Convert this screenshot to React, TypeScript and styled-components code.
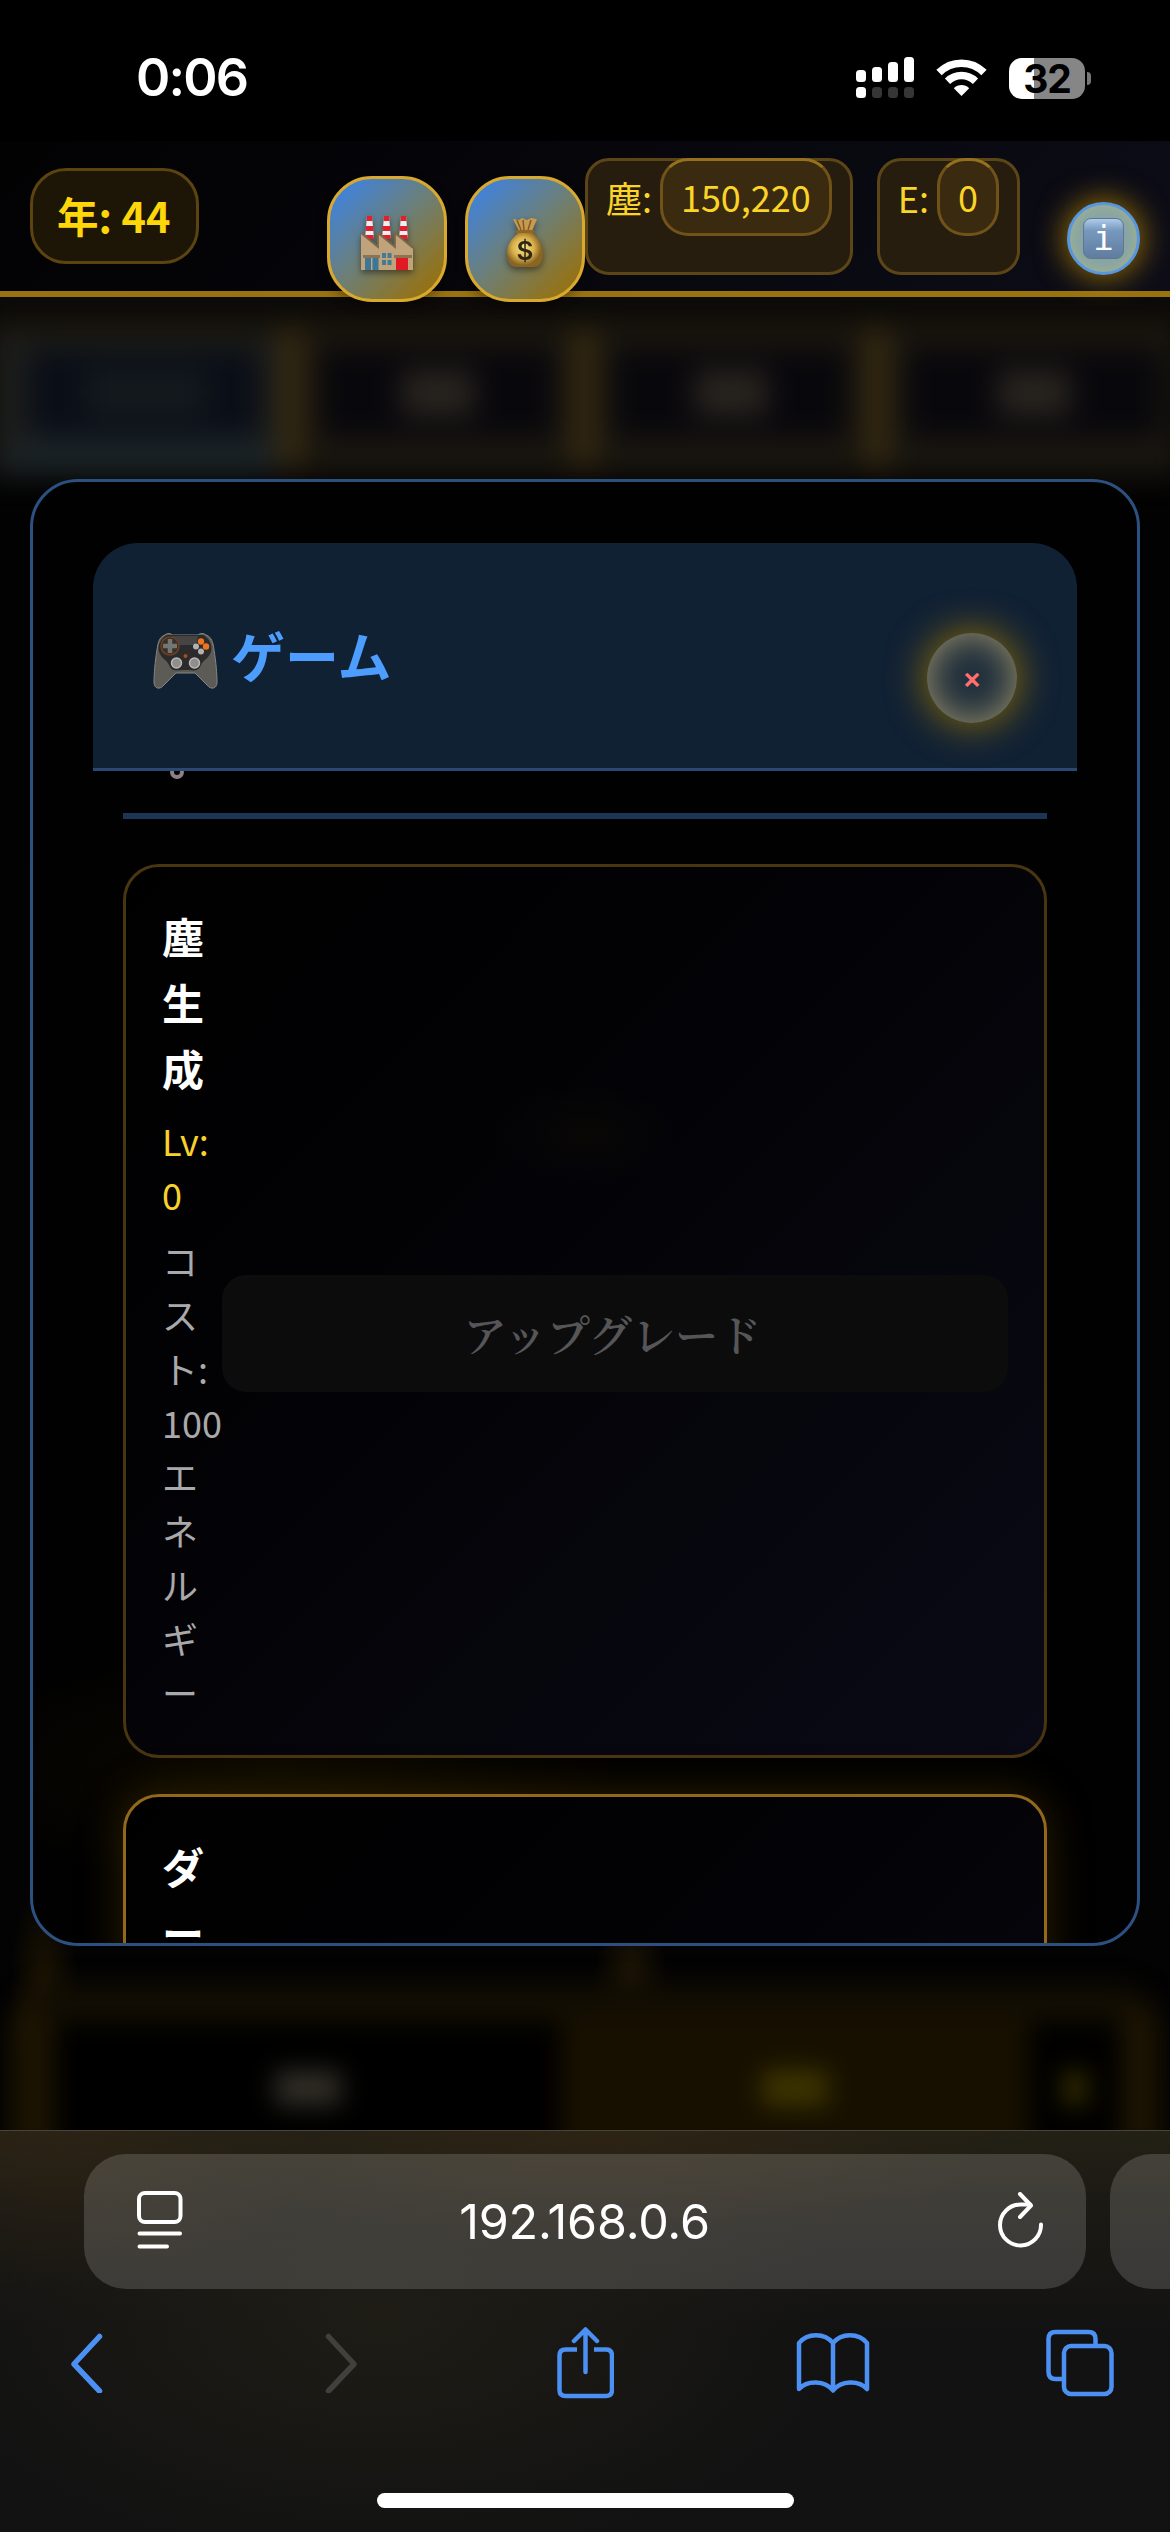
import React from 'react';
import styled, { createGlobalStyle, css } from 'styled-components';

const GlobalStyle = createGlobalStyle`
  * { box-sizing: border-box; }
  html, body { margin: 0; padding: 0; background: #000; }
`;

const jp = `'Noto Sans CJK JP', sans-serif`;
const ui = `Inter, 'Liberation Sans', sans-serif`;

const Screen = styled.div`
  width: 1170px;
  height: 2532px;
  display: flex;
  flex-direction: column;
  background: #000;
  overflow: hidden;
  font-family: ${jp};
`;

/* ---------- status bar ---------- */

const StatusBar = styled.div`
  flex: 0 0 141px;
  display: flex;
  align-items: center;
  padding: 15px 79px 0 136px;
  background: #000;
`;

const Clock = styled.span`
  flex: 1;
  font: 600 52px/60px ${ui};
  letter-spacing: -1.800px;
  color: #fff;
`;

const StatusIcons = styled.div`
  display: flex;
  align-items: center;
  gap: 22px;
`;

const BatteryWrap = styled.div`
  display: flex;
  align-items: center;
  gap: 2px;
`;

const Battery = styled.div`
  width: 76px;
  height: 41px;
  border-radius: 13px;
  background: linear-gradient(90deg, #fff 25px, #868686 25px);
  display: flex;
  align-items: center;
  justify-content: center;
  font: 700 39px/41px ${ui};
  letter-spacing: -1px;
  color: #000;
`;

const BatteryNub = styled.div`
  width: 4px;
  height: 13px;
  border-radius: 0 4px 4px 0;
  background: #777;
`;

/* ---------- game header ---------- */

const GameHeader = styled.header`
  position: relative;
  z-index: 2;
  flex: 0 0 156px;
  min-height: 0;
  display: flex;
  align-items: flex-start;
  padding: 17px 30px 0;
  border-bottom: 6px solid #99730f;
  background: linear-gradient(135deg, #020203 0%, #06060b 45%, #0d0d18 100%);
`;

const YearBadge = styled.div`
  width: 169px;
  height: 96px;
  margin-top: 10px;
  padding-left: 24px;
  border: 3px solid #5c4410;
  border-radius: 36px;
  background: #1d1606;
  color: #ffd60a;
  font-size: 41.500px;
  font-weight: 700;
  line-height: 89px;
  white-space: nowrap;
`;

const Actions = styled.div`
  display: flex;
  gap: 18px;
  margin: 18px 0 0 auto;
`;

const ActionButton = styled.button`
  width: 120px;
  height: 126px;
  padding: 8px 0 0;
  border: 3px solid #d9a92e;
  border-radius: 45px;
  background: linear-gradient(135deg, #3f82dc 8%, #6c7f78 48%, #93731a 86%);
  box-shadow: 0 6px 12px rgba(0, 0, 0, 0.3);
  display: flex;
  align-items: center;
  justify-content: center;

  svg { filter: drop-shadow(0 3px 3px rgba(0, 0, 0, 0.45)); }
`;

const Resource = styled.div<{ $gap?: number }>`
  height: 117px;
  margin-left: ${(p) => p.$gap ?? 0}px;
  padding: 0 18px;
  border: 3px solid #5c4617;
  border-radius: 24px;
  background: #261d0f;
  display: flex;
  align-items: flex-start;
  gap: 8px;
  color: #fad427;
  font-size: 36px;
  line-height: 74px;
  white-space: nowrap;
`;

const ResourceLabel = styled.span`
  margin-top: -1px;
`;

const ResourceValue = styled.span`
  height: 78px;
  margin-top: -3px;
  padding: 0 18px;
  border: 3px solid #71531a;
  border-top-color: #95711d;
  border-radius: 28px;
  background: #3a2a0f;
  line-height: 71px;
`;

const InfoButton = styled.button`
  width: 73px;
  height: 73px;
  margin: 44px 0 0 47px;
  padding: 0;
  border: 3px solid #5797e2;
  border-radius: 50%;
  background: #87a4a6;
  box-shadow: 0 0 30px 3px rgba(190, 140, 0, 0.75), inset 0 0 14px rgba(170, 185, 130, 0.8);
  display: flex;
  align-items: center;
  justify-content: center;
`;

const InfoGlyph = styled.span`
  width: 41px;
  height: 41px;
  border-radius: 8px;
  background: linear-gradient(#aecbe8, #7798bd 30%, #5f7d9f);
  border: 1px solid #5d7894;
  color: #fff;
  font: 400 34px/38px 'DejaVu Sans Mono', monospace;
  text-align: center;
`;

/* ---------- page behind the dialog ---------- */

const Page = styled.main`
  position: relative;
  flex: 1;
  min-height: 0;
  overflow: hidden;
  background: #030303;
`;

const Backdrop = styled.div`
  height: 100%;
  display: flex;
  flex-direction: column;
  justify-content: space-between;
  background:
    radial-gradient(ellipse 34px 110px at 44px 1690px, #1c1403, transparent),
    radial-gradient(ellipse 36px 80px at 631px 1680px, #1d1505, transparent),
    linear-gradient(#0b0a09, #090806 20px, #020202 230px, #030303 1600px, #020203);
`;

const TabBar = styled.div`
  display: flex;
  flex: 0 0 158px;
  margin: 20px -10px 0;
  background: #1a160e;
  filter: blur(14px);
`;

const Tab = styled.div<{ $active?: boolean; $edge?: boolean }>`
  flex: 0 0 ${(p) => (p.$edge ? 289 : 269)}px;
  display: flex;
  align-items: center;
  justify-content: center;
  margin: 20px 0 0;
  border: solid #1a1710;
  border-width: 12px 18px 38px;
  background: #08070b;
  ${(p) =>
    p.$active &&
    css`
      border-left-width: 38px;
      border-color: #1d1e1c;
      border-bottom-color: #1c2427;
      background: #0a0f17;
    `}
`;

const TabSmudge = styled.i<{ $active?: boolean }>`
  width: ${(p) => (p.$active ? 120 : 74)}px;
  height: 46px;
  background: ${(p) => (p.$active ? '#13191d' : '#28241f')};
`;

const TabDivider = styled.div`
  width: 24px;
  margin: 12px 0 8px;
  background: #372a10;
`;

const Dock = styled.div`
  flex: 0 0 166px;
  display: flex;
  margin: 0 10px -20px;
  border: solid #1c1402;
  border-width: 38px 40px 0 45px;
  border-top-color: #130e03;
  border-radius: 50px 50px 0 0;
  filter: blur(12px);
`;

const DockCell = styled.div<{ $w: number; $lit?: boolean }>`
  flex: ${(p) => p.$w};
  display: flex;
  align-items: center;
  justify-content: center;
  background: ${(p) => (p.$lit ? '#171000' : '#000')};
`;

const DockSmudge = styled.i<{ $w: number; $c: string }>`
  width: ${(p) => p.$w}px;
  height: 36px;
  margin-top: 4px;
  background: ${(p) => p.$c};
`;

/* ---------- dialog ---------- */

const Overlay = styled.div`
  position: absolute;
  inset: 0;
  padding: 182px 30px 184px;
  display: flex;
`;

const Dialog = styled.section`
  flex: 1;
  display: flex;
  flex-direction: column;
  padding: 61px 60px 0;
  border: 3px solid #2c5180;
  border-radius: 48px;
  background:
    radial-gradient(ellipse 340px 120px at 22% 88%, rgba(40, 28, 0, 0.3), transparent),
    #010101;
  overflow: hidden;
`;

const DialogHeader = styled.div`
  position: relative;
  z-index: 1;
  flex: 0 0 228px;
  display: flex;
  justify-content: space-between;
  padding: 0 60px;
  border-bottom: 3px solid #294972;
  border-radius: 45px 45px 0 0;
  background: #112134;
`;

const DialogTitle = styled.h2`
  display: flex;
  gap: 13px;
  margin: 70px 0 0;
  color: #4d9dff;
  font-size: 54px;
  font-weight: 700;
  line-height: 84px;

  svg { margin-top: 20px; }
`;

const CloseButton = styled.button`
  width: 90px;
  height: 90px;
  margin-top: 90px;
  padding: 0;
  border: 0;
  border-radius: 50%;
  background: #1f2e3c;
  box-shadow: 0 0 36px 4px rgba(160, 120, 0, 0.75), inset 0 0 36px #99906a;
  color: #ff6f6c;
  font: 600 29px/88px ${ui};
`;

const DialogBody = styled.div`
  flex: 1;
  min-height: 0;
  display: flex;
  flex-direction: column;
  padding: 0 30px;
`;

const SectionTitle = styled.h3`
  flex: 0 0 108px;
  display: flex;
  gap: 12px;
  margin: -60px 0 45px;
  padding-left: 12px;
  border-bottom: 6px solid #1d3554;
  color: #4d9dff;
  font-size: 48px;
  font-weight: 700;
  line-height: 68px;

  svg { margin-top: 15px; }
`;

const Card = styled.article<{ $ready?: boolean }>`
  flex: 0 0 894px;
  display: flex;
  align-items: flex-start;
  margin-bottom: 36px;
  padding: 36px;
  border: 3px solid ${(p) => (p.$ready ? '#92691a' : '#493610')};
  border-radius: 36px;
  background:
    radial-gradient(ellipse 90px 50px at 460px 268px, rgba(40, 28, 0, 0.16), transparent),
    linear-gradient(135deg, #000 0%, #030307 45%, #0a0a16 100%);
  box-shadow: ${(p) => (p.$ready ? '0 0 45px rgba(110, 78, 0, 0.4)' : 'none')};
`;

const CardText = styled.div`
  flex: 0 0 60px;
  line-break: anywhere;
`;

const CardName = styled.div`
  color: #fff;
  font-size: 42px;
  font-weight: 700;
  line-height: 66px;
  margin-bottom: 12px;
`;

const CardLevel = styled.div`
  color: #f8d22b;
  font-size: 36px;
  line-height: 54px;
  margin-bottom: 12px;
`;

const CardCost = styled.div`
  color: #a9a9ab;
  font-size: 36px;
  line-height: 54px;
`;

const UpgradeButton = styled.button`
  flex: 1;
  align-self: center;
  height: 117px;
  margin: 45px 0 0;
  padding: 0 5px 0 0;
  border: 0;
  border-radius: 24px;
  background: #0c0c0d;
  color: #565658;
  font: 600 43.200px/117px 'Noto Serif CJK JP', ${jp};
`;

/* ---------- browser chrome ---------- */

const BrowserBar = styled.footer`
  flex: 0 0 402px;
  display: flex;
  flex-direction: column;
  align-items: center;
  border-top: 1px solid #48443c;
  background:
    radial-gradient(ellipse 420px 110px at 600px 0, rgba(52, 38, 20, 0.6), transparent),
    radial-gradient(ellipse 260px 160px at 60px 0, rgba(52, 38, 20, 0.5), transparent),
    radial-gradient(ellipse 460px 240px at 380px 190px, rgba(32, 30, 22, 0.85), transparent),
    linear-gradient(#232015, #1b1914 80px, #121212 200px);
`;

const AddressRow = styled.div`
  align-self: stretch;
  display: flex;
  gap: 24px;
  padding: 23px 0 0 84px;
`;

const AddressField = styled.div`
  flex: 0 0 1002px;
  height: 135px;
  display: flex;
  align-items: center;
  justify-content: space-between;
  padding: 0 42px 0 53px;
  border-radius: 42px;
  background: rgba(255, 255, 255, 0.155);
`;

const AddressText = styled.span`
  margin-right: 12px;
  color: #fff;
  font: 400 48.500px/60px ${ui};
  letter-spacing: -0.200px;
`;

const NextTab = styled.div`
  flex: 0 0 120px;
  height: 135px;
  border-radius: 42px;
  background: rgba(255, 255, 255, 0.155);
`;

const Toolbar = styled.nav`
  align-self: stretch;
  display: grid;
  grid-template-columns: 255px 233px 240px 250px auto;
  align-items: center;
  height: 80px;
  margin-top: 34px;
  padding-left: 68px;
`;

const HomeIndicator = styled.div`
  width: 417px;
  height: 15px;
  margin-top: 90px;
  border-radius: 8px;
  background: #fff;
`;

/* ---------- drawings ---------- */

const SignalIcon = () => (
  <svg width="58" height="42" viewBox="0 0 58 42" fill="#fff">
    <rect x="0" y="13" width="10" height="12" rx="3.5" />
    <rect x="16" y="10" width="10" height="15" rx="3.5" />
    <rect x="32" y="5" width="10" height="20" rx="3.5" />
    <rect x="48" y="0" width="10" height="25" rx="3.5" />
    <rect x="0" y="30" width="10" height="11" rx="3.5" />
    <g fill="#363636">
      <rect x="16" y="30" width="10" height="11" rx="3.5" />
      <rect x="32" y="30" width="10" height="11" rx="3.5" />
      <rect x="48" y="30" width="10" height="11" rx="3.5" />
    </g>
  </svg>
);

const WifiIcon = () => (
  <svg width="51" height="38" viewBox="0 0 51 38" fill="none" stroke="#fff">
    <path d="M3 13.5C15.5 1 35.5 1 48 13.5" strokeWidth="7.5" />
    <path d="M11.5 22.3C19.5 14.7 31.5 14.7 39.5 22.3" strokeWidth="7.5" />
    <path d="M17.800 29.300C22 25 29 25 33.200 29.300L25.500 37Z" fill="#fff" stroke="none" />
  </svg>
);

const FactoryIcon = () => (
  <svg width="54" height="56" viewBox="0 0 54 56">
    {[6, 23, 40].map((x) => (
      <g key={x}>
        <path d={`M${x + 1} 1H${x + 6}L${x + 8} 24H${x - 1}Z`} fill="#f1eeee" />
        <path
          d={`M${x + 1} 1H${x + 6}L${x + 6.5} 6H${x + 0.5}ZM${x} 11H${x + 7}L${x + 7.5} 16H${x - 0.5}ZM${x - 0.5} 20H${x + 7.5}L${x + 8} 24H${x - 1}Z`}
          fill="#e0202c"
        />
      </g>
    ))}
    <path d="M1 18L18 32V18L35 32V18L53 33V55H1Z" fill="#c0a37b" />
    <path d="M1 18L18 32V18L35 32V18L53 33" fill="none" stroke="#7d6749" strokeWidth="1.8" />
    <path d="M3 40H20V43H3ZM34 40H52V43H34Z" fill="#8b7456" />
    <path d="M5 43H11V55H5ZM12.5 43H18.5V55H12.5Z" fill="#3d7797" />
    <path d="M22 38H26V43H22ZM27.5 38H31.5V43H27.5ZM22 45H26V50H22ZM27.5 45H31.5V50H27.5Z" fill="#437a94" />
    <rect x="36" y="43" width="12" height="12" fill="#e01923" />
  </svg>
);

const MoneyIcon = () => (
  <svg width="40" height="52" viewBox="0 0 40 52">
    <defs>
      <radialGradient id="bag" cx="45%" cy="45%">
        <stop offset="0" stopColor="#fbe58b" />
        <stop offset="0.6" stopColor="#d9b04a" />
        <stop offset="1" stopColor="#8a6423" />
      </radialGradient>
    </defs>
    <path d="M8 2L14 3L17 1L22 3L26 1L32 2L27 14H14Z" fill="#c79a4e" />
    <path d="M12 3L16 13M18 3L19 13M26 3L23 13" stroke="#7f5b25" strokeWidth="1.5" fill="none" />
    <path d="M14 15H27C33 21 38 26 38 36C38 46 34 50 28 50H12C6 50 2 46 2 36C2 26 8 21 14 15Z" fill="url(#bag)" />
    <path d="M12 14.5H28" stroke="#8f6625" strokeWidth="3" strokeLinecap="round" />
    <text x="20" y="43" textAnchor="middle" fontFamily="Inter, sans-serif" fontSize="26" fontWeight="600" fill="#2f2716">$</text>
  </svg>
);

const GamepadIcon = () => (
  <svg width="65" height="56" viewBox="0 0 65 56">
    <path
      d="M12 2C14 0 18 0 19 2H45C47 0 51 0 53 2C59 4 60 10 61 17C63 29 64 41 64 49C64 56 58 57 54 52L42 40H23L11 52C7 57 1 56 1 49C1 41 2 29 4 17C5 10 6 4 12 2Z"
      fill="#5d5b56"
      stroke="#898782"
      strokeWidth="1"
    />
    <path d="M14 2H50C56 5 60 12 58 19C55 27 50 26 47 34C44 39 40 37 32 37C24 37 20 39 17 34C14 26 9 27 6 19C4 12 8 5 14 2Z" fill="#2b2b2b" />
    <path d="M19 3H45L43 12H21Z" fill="#454545" />
    <circle cx="17" cy="13" r="9" fill="#34312e" stroke="#71401f" strokeWidth="1.5" />
    <path d="M17 6V20M10 13H24" stroke="#767671" strokeWidth="4.5" />
    <circle cx="48" cy="8.500" r="3.2" fill="#ee741f" />
    <circle cx="53" cy="13.500" r="3.2" fill="#ee741f" />
    <circle cx="43" cy="13.500" r="3" fill="#b3b1b1" />
    <circle cx="48" cy="18.500" r="3" fill="#b3b1b1" />
    <circle cx="32.500" cy="23" r="2" fill="#a54c1a" />
    <circle cx="23.500" cy="30" r="5" fill="#8e8e8c" stroke="#b8b8b5" strokeWidth="1.5" />
    <circle cx="41.500" cy="30" r="5" fill="#8e8e8c" stroke="#b8b8b5" strokeWidth="1.5" />
  </svg>
);

const WrenchIcon = () => (
  <svg width="54" height="54" viewBox="0 0 54 54" fill="none" stroke="#8f7f86">
    <path d="M14 14L38 42" strokeWidth="9" />
    <circle cx="42" cy="46" r="5" strokeWidth="4" />
    <path d="M6 10L14 16L18 6" strokeWidth="6" />
  </svg>
);

const ReaderIcon = () => (
  <svg width="46" height="62" viewBox="0 0 46 62" fill="none" stroke="#fff" strokeWidth="4" strokeLinecap="round">
    <rect x="2" y="2" width="41.500" height="29" rx="6" />
    <path d="M2.500 42.500H43M2.500 55.500H30" />
  </svg>
);

const ReloadIcon = () => (
  <svg width="46" height="60" viewBox="0 0 46 60" fill="none" stroke="#fff" strokeWidth="4" strokeLinecap="round" strokeLinejoin="round">
    <path d="M43 32.500A20.500 20.500 0 1 1 22.500 12.500H32" />
    <path d="M22 2L33 13.500L22 25" />
  </svg>
);

const chrome = { fill: 'none', stroke: '#4b90f2', strokeLinecap: 'round', strokeLinejoin: 'round' } as const;

const BackIcon = () => (
  <svg width="36" height="60" viewBox="0 0 36 60" {...chrome} strokeWidth="5.5">
    <path d="M31.500 3.500L6 31L31.500 58" />
  </svg>
);

const ForwardIcon = () => (
  <svg width="36" height="60" viewBox="0 0 36 60" {...chrome} stroke="#42403c" strokeWidth="5.5">
    <path d="M5.500 3.500L31 31L5.500 58" />
  </svg>
);

const ShareIcon = () => (
  <svg width="58" height="72" viewBox="0 0 58 72" {...chrome} strokeWidth="4.5">
    <path d="M21 22.500H9.500Q3.500 22.500 3.500 28.500V63Q3.500 69 9.500 69H50Q56 69 56 63V28.500Q56 22.500 50 22.500H38" strokeLinecap="butt" />
    <path d="M29.500 45V3M18 14L29.500 2.500L41 14" />
  </svg>
);

const BookIcon = () => (
  <svg width="74" height="62" viewBox="0 0 74 62" {...chrome} strokeWidth="4.5">
    <path d="M37 11C29 0.500 11 0.500 3 11V57C11 48 29 48 37 58.500C45 48 63 48 71 57V11C63 0.500 45 0.500 37 11ZM37 11V58" />
  </svg>
);

const TabsIcon = () => (
  <svg width="68" height="68" viewBox="0 0 68 68" {...chrome} strokeWidth="4.5">
    <path d="M49.500 17V10Q49.500 3 42.500 3H9.500Q2.500 3 2.500 10V43Q2.500 50 9.500 50H17" strokeLinecap="butt" />
    <rect x="18" y="17" width="47.500" height="48" rx="7" />
  </svg>
);

/* ---------- app ---------- */

const dockCells = [
  { w: 505, lit: false, smudge: 66, color: '#302d26' },
  { w: 470, lit: true, smudge: 66, color: '#3d3400' },
  { w: 90, lit: false, smudge: 24, color: '#332c00' },
];

export default function App() {
  return (
    <Screen>
      <GlobalStyle />
      <StatusBar>
        <Clock>0:06</Clock>
        <StatusIcons>
          <SignalIcon />
          <WifiIcon />
          <BatteryWrap>
            <Battery>32</Battery>
            <BatteryNub />
          </BatteryWrap>
        </StatusIcons>
      </StatusBar>

      <GameHeader>
        <YearBadge>年: 44</YearBadge>
        <Actions>
          <ActionButton><FactoryIcon /></ActionButton>
          <ActionButton><MoneyIcon /></ActionButton>
        </Actions>
        <Resource>
          <ResourceLabel>塵:</ResourceLabel>
          <ResourceValue>150,220</ResourceValue>
        </Resource>
        <Resource $gap={24}>
          <ResourceLabel>E:</ResourceLabel>
          <ResourceValue>0</ResourceValue>
        </Resource>
        <InfoButton><InfoGlyph>i</InfoGlyph></InfoButton>
      </GameHeader>

      <Page>
        <Backdrop>
          <TabBar>
            {[0, 1, 2, 3].map((n) => (
              <React.Fragment key={n}>
                {n > 0 && <TabDivider />}
                <Tab $active={n === 0} $edge={n === 0 || n === 3}><TabSmudge $active={n === 0} /></Tab>
              </React.Fragment>
            ))}
          </TabBar>
          <Dock>
            {dockCells.map((c) => (
              <DockCell key={c.w} $w={c.w} $lit={c.lit}>
                <DockSmudge $w={c.smudge} $c={c.color} />
              </DockCell>
            ))}
          </Dock>
        </Backdrop>
        <Overlay>
          <Dialog>
            <DialogHeader>
              <DialogTitle><GamepadIcon />ゲーム</DialogTitle>
              <CloseButton>×</CloseButton>
            </DialogHeader>
            <DialogBody>
              <SectionTitle><WrenchIcon />アップグレード</SectionTitle>
              <Card>
                <CardText>
                  <CardName>塵生成</CardName>
                  <CardLevel>Lv: 0</CardLevel>
                  <CardCost>コスト: 100 エネルギー</CardCost>
                </CardText>
                <UpgradeButton>アップグレード</UpgradeButton>
              </Card>
              <Card $ready>
                <CardText>
                  <CardName>ダー</CardName>
                </CardText>
              </Card>
            </DialogBody>
          </Dialog>
        </Overlay>
      </Page>

      <BrowserBar>
        <AddressRow>
          <AddressField>
            <ReaderIcon />
            <AddressText>192.168.0.6</AddressText>
            <ReloadIcon />
          </AddressField>
          <NextTab />
        </AddressRow>
        <Toolbar>
          <BackIcon />
          <ForwardIcon />
          <ShareIcon />
          <BookIcon />
          <TabsIcon />
        </Toolbar>
        <HomeIndicator />
      </BrowserBar>
    </Screen>
  );
}
